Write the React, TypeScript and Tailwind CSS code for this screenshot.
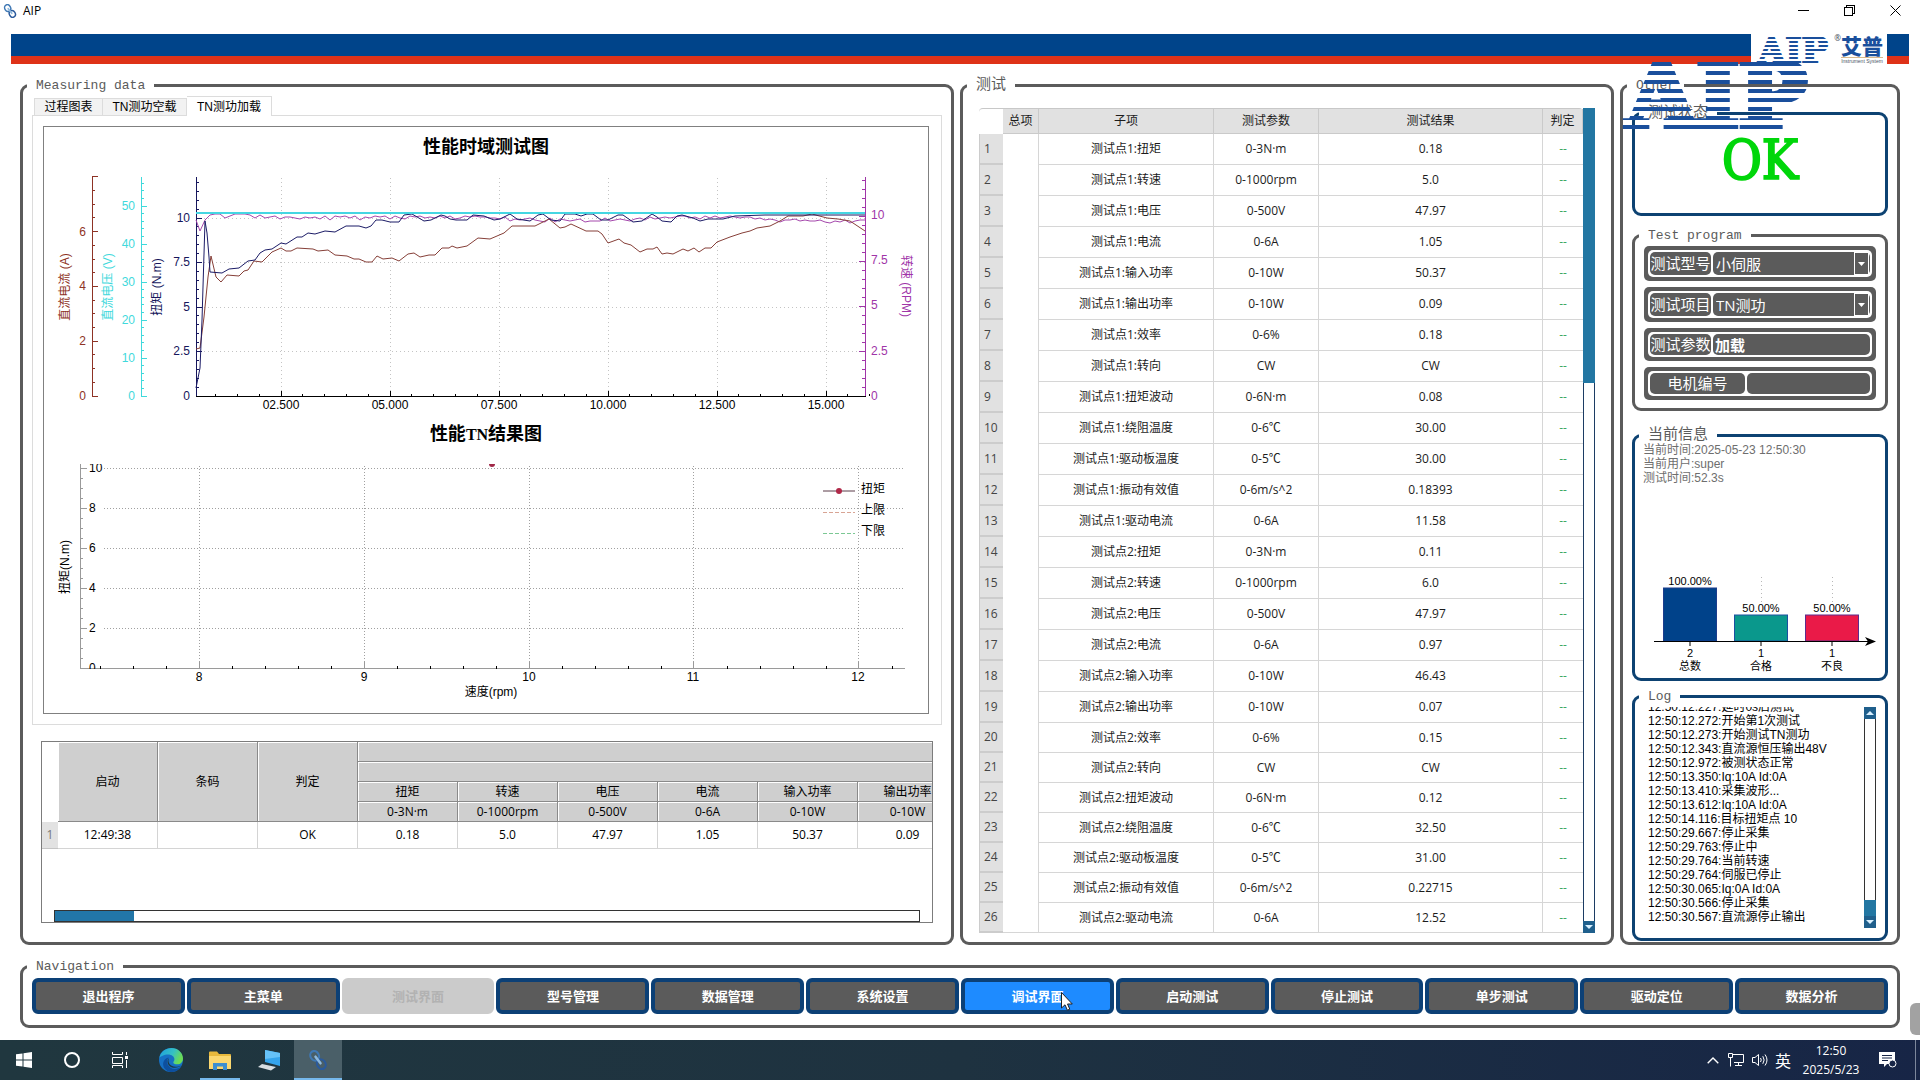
import type { ReactNode } from 'react';
import clsx from 'clsx';

const uiFont = "font-['Open_Sans','Noto_Sans_CJK_SC',sans-serif]";
const songFont = "font-['Liberation_Sans','Noto_Sans_CJK_SC',sans-serif]";

const points: [string, string, string][] = [
  ['测试点1:扭矩', '0-3N·m', '0.18'],
  ['测试点1:转速', '0-1000rpm', '5.0'],
  ['测试点1:电压', '0-500V', '47.97'],
  ['测试点1:电流', '0-6A', '1.05'],
  ['测试点1:输入功率', '0-10W', '50.37'],
  ['测试点1:输出功率', '0-10W', '0.09'],
  ['测试点1:效率', '0-6%', '0.18'],
  ['测试点1:转向', 'CW', 'CW'],
  ['测试点1:扭矩波动', '0-6N·m', '0.08'],
  ['测试点1:绕阻温度', '0-6℃', '30.00'],
  ['测试点1:驱动板温度', '0-5℃', '30.00'],
  ['测试点1:振动有效值', '0-6m/s^2', '0.18393'],
  ['测试点1:驱动电流', '0-6A', '11.58'],
  ['测试点2:扭矩', '0-3N·m', '0.11'],
  ['测试点2:转速', '0-1000rpm', '6.0'],
  ['测试点2:电压', '0-500V', '47.97'],
  ['测试点2:电流', '0-6A', '0.97'],
  ['测试点2:输入功率', '0-10W', '46.43'],
  ['测试点2:输出功率', '0-10W', '0.07'],
  ['测试点2:效率', '0-6%', '0.15'],
  ['测试点2:转向', 'CW', 'CW'],
  ['测试点2:扭矩波动', '0-6N·m', '0.12'],
  ['测试点2:绕阻温度', '0-6℃', '32.50'],
  ['测试点2:驱动板温度', '0-5℃', '31.00'],
  ['测试点2:振动有效值', '0-6m/s^2', '0.22715'],
  ['测试点2:驱动电流', '0-6A', '12.52'],
];

const summary: [string, string, string][] = [
  ['扭矩', '0-3N·m', '0.18'],
  ['转速', '0-1000rpm', '5.0'],
  ['电压', '0-500V', '47.97'],
  ['电流', '0-6A', '1.05'],
  ['输入功率', '0-10W', '50.37'],
  ['输出功率', '0-10W', '0.09'],
];

const logLines = [
  '12:50:12.227:延时0s后测试',
  '12:50:12.272:开始第1次测试',
  '12:50:12.273:开始测试TN测功',
  '12:50:12.343:直流源恒压输出48V',
  '12:50:12.972:被测状态正常',
  '12:50:13.350:Iq:10A Id:0A',
  '12:50:13.410:采集波形...',
  '12:50:13.612:Iq:10A Id:0A',
  '12:50:14.116:目标扭矩点 10',
  '12:50:29.667:停止采集',
  '12:50:29.763:停止中',
  '12:50:29.764:当前转速',
  '12:50:29.764:伺服已停止',
  '12:50:30.065:Iq:0A Id:0A',
  '12:50:30.566:停止采集',
  '12:50:30.567:直流源停止输出',
];

const navItems = [
  '退出程序',
  '主菜单',
  '测试界面',
  '型号管理',
  '数据管理',
  '系统设置',
  '调试界面',
  '启动测试',
  '停止测试',
  '单步测试',
  '驱动定位',
  '数据分析',
];

const torqueCurve =
  '196,388 200,368 202,320 205,221 207,233 209,257 210,272 222,273 229,269 239,268 248,261 255,260 260,253 265,250 272,249 281,243 286,244 297,237 302,237 308,233 315,234 325,231 335,232 346,226 359,226 366,228 371,226 376,220 382,220 390,222 399,222 404,215 412,214 424,221 431,220 441,215 445,216 450,219 456,220 467,220 473,215 484,216 494,220 500,219 510,214 517,219 530,221 538,215 543,214 551,220 560,221 565,214 575,214 581,216 587,214 593,214 601,220 608,220 618,215 623,215 633,222 642,221 652,214 657,217 662,221 671,222 677,216 682,215 693,218 700,221 708,219 723,219 735,216 765,215 865,215';

const currentCurve =
  '196,349 200,348 204,317 208,277 211,256 216,277 221,282 227,275 239,276 244,271 248,270 254,261 262,262 272,252 281,248 286,251 291,251 297,248 313,249 318,251 328,250 335,255 347,256 354,259 359,259 366,262 372,262 377,256 383,259 392,258 399,261 408,254 414,253 420,257 429,255 435,255 442,248 449,248 452,246 457,248 467,246 478,238 490,239 504,233 512,226 535,226 549,219 560,228 565,227 571,224 586,231 598,231 602,234 608,243 619,239 624,243 631,245 640,252 647,249 653,249 657,247 662,254 667,253 673,254 683,249 688,251 694,248 699,252 705,248 711,248 717,242 730,237 742,233 750,231 757,228 770,226 780,221 788,216 803,216 812,214 827,218 838,219 850,221 865,231';

// speed samples, every 5px, as an offset below y=213
const speedSamples =
  '72115311125254364456454637343537453436356343545353653434455648676578959678769888587678657465454335463535434544657679776878879a897a877a99778785877567';

const speedCurve = [
  '196,220 200,231',
  ...speedSamples
    .slice(0, 132)
    .split('')
    .map((c, i) => `${205 + i * 5},${213 + parseInt(c, 16)}`),
  '865,220',
].join(' ');

const range = (n: number) => Array.from({ length: n }, (_, i) => i);

type AxisProps = {
  x: number;
  color: string;
  step: number;
  count: number;
  every: number;
  dir?: number;
  labels: [string, number][];
  labelX: number;
};

function YAxis({ x, color, step, count, every, dir = 1, labels, labelX }: AxisProps) {
  return (
    <g stroke={color} fill={color} shapeRendering="crispEdges">
      <line x1={x} x2={x} y1={177} y2={397} />
      {range(count).map((i) => (
        <line
          key={i}
          x1={x}
          x2={x + dir * (i % every === 0 ? 6 : 3)}
          y1={396 - i * step}
          y2={396 - i * step}
        />
      ))}
      {labels.map(([label, y]) => (
        <text
          key={label}
          x={labelX}
          y={y + 4}
          stroke="none"
          textAnchor={dir > 0 ? 'end' : 'start'}
        >
          {label}
        </text>
      ))}
    </g>
  );
}

function Charts() {
  return (
    <svg viewBox="44 127 884 586" className={clsx('block w-full text-[12px]', songFont)}>
      <text x="486" y="153" textAnchor="middle" className="text-[18px] font-bold">
        性能时域测试图
      </text>

      <g stroke="#c4c4c4" strokeDasharray="1 3" shapeRendering="crispEdges">
        {[281, 390, 499, 608, 717, 826].map((x) => (
          <line key={x} x1={x} x2={x} y1={178} y2={396} />
        ))}
        {[218, 262, 307, 351].map((y) => (
          <line key={y} x1={196} x2={865} y1={y} y2={y} />
        ))}
      </g>

      <YAxis
        x={92}
        color="#8e3325"
        step={13.7}
        count={17}
        every={4}
        labels={[['0', 396], ['2', 341], ['4', 286], ['6', 232]]}
        labelX={86}
      />
      <YAxis
        x={141}
        color="#3fd9dc"
        step={7.6}
        count={29}
        every={5}
        labels={[['0', 396], ['10', 358], ['20', 320], ['30', 282], ['40', 244], ['50', 206]]}
        labelX={135}
      />
      <YAxis
        x={196}
        color="#16165c"
        step={8.9}
        count={25}
        every={5}
        labels={[['0', 396], ['2.5', 351], ['5', 307], ['7.5', 262], ['10', 218]]}
        labelX={190}
      />
      <YAxis
        x={865}
        color="#a035a8"
        step={9}
        count={25}
        every={5}
        dir={-1}
        labels={[['0', 396], ['2.5', 351], ['5', 305], ['7.5', 260], ['10', 215]]}
        labelX={871}
      />

      <g textAnchor="middle">
        <text transform="translate(69 287) rotate(-90)" fill="#8e3325">直流电流 (A)</text>
        <text transform="translate(112 287) rotate(-90)" fill="#3fd9dc">直流电压 (V)</text>
        <text transform="translate(161 287) rotate(-90)" fill="#16165c">扭矩 (N.m)</text>
        <text transform="translate(902 286) rotate(90)" fill="#a035a8">转速 (RPM)</text>
      </g>

      <g stroke="#000" shapeRendering="crispEdges">
        <line x1={196} x2={866} y1={396.5} y2={396.5} />
        {range(31).map((i) => (
          <line
            key={i}
            x1={215.6 + i * 21.8}
            x2={215.6 + i * 21.8}
            y1={i % 5 === 3 ? 391 : 394}
            y2={396}
          />
        ))}
      </g>
      <g textAnchor="middle">
        {['02.500', '05.000', '07.500', '10.000', '12.500', '15.000'].map((t, i) => (
          <text key={t} x={281 + i * 109} y={409}>
            {t}
          </text>
        ))}
      </g>

      <g fill="none" strokeLinejoin="round">
        <polyline points={speedCurve} stroke="#a548ac" />
        <polyline points={currentCurve} stroke="#863f38" />
        <polyline points={torqueCurve} stroke="#1b1b66" />
        <line x1={196} x2={865} y1={213} y2={213} stroke="#45d6e2" strokeWidth={2} />
      </g>

      <text x="486" y="440" textAnchor="middle" className="text-[18px] font-bold">
        性能
        <tspan className="font-['Liberation_Serif'] text-[16px]">TN</tspan>
        结果图
      </text>

      <g stroke="#a0a0a0" strokeDasharray="1 2" shapeRendering="crispEdges">
        {[199, 364, 529, 693, 858].map((x) => (
          <line key={x} x1={x} x2={x} y1={466} y2={668} />
        ))}
        {[468, 508, 548, 588, 628].map((y) => (
          <line key={y} x1={104} x2={904} y1={y} y2={y} />
        ))}
      </g>
      <g stroke="#9a9a9a" shapeRendering="crispEdges">
        <line x1={80} x2={80} y1={464} y2={669} />
        <line x1={80} x2={905} y1={668} y2={668} />
        {range(21).map((i) => (
          <line key={i} x1={80} x2={i % 4 === 0 ? 87 : 83} y1={668 - i * 10} y2={668 - i * 10} />
        ))}
        {[199, 364, 529, 693, 858].map((x) => (
          <line key={x} x1={x} x2={x} y1={662} y2={668} />
        ))}
      </g>
      <g stroke="#000" shapeRendering="crispEdges">
        {range(25)
          .filter((i) => i % 5 !== 3)
          .map((i) => (
            <line key={i} x1={100 + i * 33} x2={100 + i * 33} y1={666} y2={669} />
          ))}
      </g>
      <clipPath id="tn-plot">
        <rect x="80" y="464" width="830" height="205" />
      </clipPath>
      <g clipPath="url(#tn-plot)">
        {['0', '2', '4', '6', '8', '10'].map((t, i) => (
          <text key={t} x={89} y={672 - i * 40}>
            {t}
          </text>
        ))}
        <circle cx="492" cy="464" r="3" fill="#a02848" />
      </g>
      <g textAnchor="middle">
        {[199, 364, 529, 693, 858].map((x, i) => (
          <text key={x} x={x} y={681}>
            {8 + i}
          </text>
        ))}
        <text x="491" y="696">速度(rpm)</text>
        <text transform="translate(69 567) rotate(-90)">扭矩(N.m)</text>
      </g>

      <line x1={823} x2={855} y1={491} y2={491} stroke="#5a3a48" />
      <circle cx="839" cy="491" r="3" fill="#b02848" />
      <line x1={823} x2={855} y1={512.5} y2={512.5} stroke="#d8a494" strokeDasharray="4 2" />
      <line x1={823} x2={855} y1={533.5} y2={533.5} stroke="#7cc894" strokeDasharray="4 2" />
      <text x="861" y="493">扭矩</text>
      <text x="861" y="514">上限</text>
      <text x="861" y="535">下限</text>
    </svg>
  );
}

function YieldChart() {
  const bars = [
    { x: 1690, top: 588, pct: '100.00%', n: '2', name: '总数', fill: '#00428a', edge: '#1c3c8c' },
    { x: 1761, top: 615, pct: '50.00%', n: '1', name: '合格', fill: '#0a988c', edge: '#1c50a0' },
    { x: 1832, top: 615, pct: '50.00%', n: '1', name: '不良', fill: '#ea1a48', edge: '#5c2c8c' },
  ];

  return (
    <svg viewBox="1635 574 250 102" className={clsx('block w-full text-[11px]', songFont)}>
      <g stroke="#b8b8b8" strokeDasharray="1 3" shapeRendering="crispEdges">
        <line x1={1761} x2={1761} y1={577} y2={602} />
        <line x1={1832} x2={1832} y1={577} y2={602} />
      </g>
      {bars.map((b) => (
        <g key={b.name} textAnchor="middle">
          <rect x={b.x - 26.5} y={b.top} width={53} height={641 - b.top} fill={b.fill} stroke={b.edge} />
          <line x1={b.x} x2={b.x} y1={641} y2={646} stroke="#000" />
          <text x={b.x} y={b.top - 3}>{b.pct}</text>
          <text x={b.x} y={657}>{b.n}</text>
          <text x={b.x} y={670}>{b.name}</text>
        </g>
      ))}
      <line x1={1654} x2={1870} y1={641.5} y2={641.5} stroke="#000" />
      <path d="M1876 641.5 L1865 637 L1868 641.5 L1865 646 Z" />
    </svg>
  );
}

type GroupProps = {
  title: string;
  cjk?: boolean;
  blue?: boolean;
  className?: string;
  children: ReactNode;
};

function Group({ title, cjk, blue, className, children }: GroupProps) {
  return (
    <fieldset
      className={clsx(
        'min-w-0 rounded-[9px] border-3',
        blue ? 'border-[#0d4272]' : 'border-[#5b5b5b]',
        className,
      )}
    >
      <legend
        className={clsx(
          "ml-1 px-[9px] font-['Liberation_Mono','Noto_Sans_CJK_SC',monospace] leading-[15px] whitespace-nowrap text-[#5b5b5b]",
          cjk ? 'text-[15px]' : 'text-[13px]',
        )}
      >
        {title}
      </legend>
      {children}
    </fieldset>
  );
}

function StripedLogo({ id, size, className }: { id: string; size: 'lg' | 'sm'; className?: string }) {
  const big = size === 'lg';
  return (
    <svg
      viewBox={big ? '0 0 200 67' : '0 0 78 27'}
      className={className}
      aria-label="AIP"
    >
      <pattern
        id={id}
        width="10"
        height={big ? 9 : 4}
        patternUnits="userSpaceOnUse"
      >
        <rect width="10" height={big ? 4 : 2} fill="#1a4f9c" />
      </pattern>
      <text
        x={big ? 5 : 2}
        y={big ? 65 : 26}
        fill={`url(#${id})`}
        stroke={`url(#${id})`}
        strokeWidth={big ? 7 : 2}
        className={clsx(
          "font-['DejaVu_Serif',serif] font-bold",
          big ? 'text-[90px]' : 'text-[35px]',
        )}
      >
        AIP
      </text>
    </svg>
  );
}

function LinkIcon({ className }: { className?: string }) {
  return (
    <svg viewBox="0 0 24 24" fill="none" className={className}>
      <ellipse cx="8" cy="7" rx="5" ry="6" transform="rotate(-30 8 7)" stroke="#3f78b4" strokeWidth="2.5" />
      <ellipse cx="16" cy="17" rx="5" ry="6" transform="rotate(-30 16 17)" stroke="#2a5a9c" strokeWidth="2.5" />
      <path d="M9 8 L15 16" stroke="#8db8de" strokeWidth="3" strokeLinecap="round" />
    </svg>
  );
}

function TitleBar() {
  return (
    <header className="flex h-[34px] items-start justify-between">
      <div className="flex h-[22px] items-center gap-[6px] pl-[3px]">
        <LinkIcon className="size-[14px]" />
        <h1 className="font-['Open_Sans',sans-serif] text-[12px]">AIP</h1>
      </div>
      <div className="flex h-[20px] items-center">
        <button type="button" aria-label="minimize" className="flex w-[46px] justify-center">
          <svg width="11" height="11" stroke="#000" shapeRendering="crispEdges">
            <path d="M0 5.5 H11" />
          </svg>
        </button>
        <button type="button" aria-label="restore" className="flex w-[46px] justify-center">
          <svg width="11" height="11" fill="none" stroke="#000" shapeRendering="crispEdges">
            <path d="M0.5 2.5 H8.5 V10.5 H0.5 Z M2.5 2.5 V0.5 H10.5 V8.5 H8.5" />
          </svg>
        </button>
        <button type="button" aria-label="close" className="flex w-[46px] justify-center">
          <svg width="11" height="11" stroke="#000">
            <path d="M0.5 0.5 L10.5 10.5 M10.5 0.5 L0.5 10.5" />
          </svg>
        </button>
        <span className="w-[2px]" />
      </div>
    </header>
  );
}

function Banner() {
  return (
    <div className="relative mx-[11px] flex h-[30px]">
      <div className="flex-1 border-b-8 border-[#de3218] bg-[#00448a]" />
      <div className="flex w-[136px] justify-between pr-[4px] pl-[5px]">
        <StripedLogo id="stripes-sm" size="sm" className="mt-[3px] h-[27px] w-[78px]" />
        <span className="text-[8px] leading-[8px] text-gray-600">®</span>
        <div className="flex flex-col items-center">
          <span className="font-['Noto_Sans_CJK_SC',sans-serif] text-[21px] leading-[23px] font-black text-[#1a4f9c]">
            艾普
          </span>
          <span className="border-t border-[#d8b88c] font-['Liberation_Sans',sans-serif] text-[5px] leading-[6px] whitespace-nowrap text-gray-600">
            Instrument System
          </span>
        </div>
      </div>
      <div className="w-[22px] border-b-8 border-[#de3218] bg-[#00448a]" />
      <StripedLogo
        id="stripes-lg"
        size="lg"
        className="absolute top-[28px] right-[87px] z-10 h-[67px] w-[200px]"
      />
    </div>
  );
}

function SummaryTable() {
  const head = 'border-r border-b border-[#8a8a8a] bg-[#cfcfcf] font-normal shadow-[inset_1px_1px_0_#fff]';
  const cell = 'border-r border-b border-[#d4d4d4] text-center';
  return (
    <div className="mx-[9px] mt-4 flex h-[182px] flex-col justify-between overflow-hidden border border-[#7c7c7c]">
      <table className={clsx('w-[916px] table-fixed border-separate border-spacing-0 text-[12px] leading-4', uiFont)}>
        <colgroup>
          <col className="w-4" />
          {range(9).map((i) => (
            <col key={i} className="w-[100px]" />
          ))}
        </colgroup>
        <thead>
          <tr className="h-5">
            <td rowSpan={4} />
            {['启动', '条码', '判定'].map((t) => (
              <th key={t} rowSpan={4} className={head}>
                {t}
              </th>
            ))}
            <th colSpan={6} className={head} />
          </tr>
          <tr className="h-5">
            <th colSpan={6} className={head} />
          </tr>
          <tr className="h-5">
            {summary.map(([name]) => (
              <th key={name} className={head}>
                {name}
              </th>
            ))}
          </tr>
          <tr className="h-5">
            {summary.map(([name, limit]) => (
              <th key={name} className={head}>
                {limit}
              </th>
            ))}
          </tr>
        </thead>
        <tbody>
          <tr className="h-[27px]">
            <th scope="row" className="border-b border-[#c4c4c4] bg-[#e2e2e2] font-normal text-[#777]">
              1
            </th>
            <td className={cell}>12:49:38</td>
            <td className={cell} />
            <td className={cell}>OK</td>
            {summary.map(([name, , value]) => (
              <td key={name} className={cell}>
                {value}
              </td>
            ))}
          </tr>
        </tbody>
      </table>
      <div className="mr-3 ml-3 h-3 border border-[#333]">
        <div className="h-full w-[79px] bg-[#2276a8]" />
      </div>
    </div>
  );
}

function MeasuringPanel() {
  return (
    <Group title="Measuring data">
      <div className="px-[9px] pt-[3px] pb-[18px]">
        <div role="tablist" className={clsx('flex items-end pl-[2px] text-[12px] leading-4', songFont)}>
          <button role="tab" type="button" className="h-[17px] w-[69px] border border-b-0 border-[#dcdcdc] bg-[#f2f2f2]">
            过程图表
          </button>
          <button role="tab" type="button" className="h-[17px] w-[84px] border border-b-0 border-l-0 border-[#dcdcdc] bg-[#f2f2f2]">
            TN测功空载
          </button>
          <button role="tab" type="button" aria-selected className="relative -mb-px h-5 w-[85px] border border-b-0 border-l-0 border-[#dcdcdc] bg-white">
            TN测功加载
          </button>
        </div>
        <div className="border border-[#dcdcdc] pt-[10px] pr-3 pb-[10px] pl-[10px]">
          <div className="border border-[#808080]">
            <Charts />
          </div>
        </div>
        <SummaryTable />
      </div>
    </Group>
  );
}

function TestPanel() {
  const head = 'border-r border-b border-[#cacaca] bg-[#e1e1e1] font-normal';
  const cell = 'border-r border-b border-[#d6d6d6] text-center';
  return (
    <Group title="测试" cjk>
      <div className="flex px-4 pt-[15px] pb-[9px]">
        <table
          className={clsx(
            'flex-1 table-fixed border-separate border-spacing-0 rounded-[4px] border-t border-[#c8c8c8] text-[12px] leading-4 text-[#1c1c1c]',
            uiFont,
          )}
        >
          <colgroup>
            <col className="w-6" />
            <col className="w-9" />
            <col className="w-[175px]" />
            <col className="w-[105px]" />
            <col />
            <col className="w-10" />
          </colgroup>
          <thead>
            <tr className="h-[25px]">
              <td />
              {['总项', '子项', '测试参数', '测试结果', '判定'].map((t) => (
                <th key={t} className={head}>
                  {t}
                </th>
              ))}
            </tr>
          </thead>
          <tbody>
            {points.map(([name, limit, value], i) => (
              <tr key={name} className={i < 19 ? 'h-[31px]' : 'h-[30px]'}>
                <th
                  scope="row"
                  className="border-b-2 border-l border-[#cccccc] bg-[#e1e1e1] pl-1 text-left font-normal text-[#444]"
                >
                  {i + 1}
                </th>
                {i === 0 && <td rowSpan={points.length} className="border-r border-b border-[#d6d6d6]" />}
                <td className={cell}>{name}</td>
                <td className={cell}>{limit}</td>
                <td className={cell}>{value}</td>
                <td className="border-b border-[#d6d6d6] text-center text-[#3aa860]">--</td>
              </tr>
            ))}
          </tbody>
        </table>
        <div className="flex w-3 flex-col justify-between border-x border-[#1c3c64]">
          <div className="-mx-px h-[275px] bg-[#2276a2]" />
          <ScrollArrow down />
        </div>
      </div>
    </Group>
  );
}

function ScrollArrow({ down }: { down?: boolean }) {
  return (
    <div className="-mx-px flex h-3 items-center justify-center bg-[#1f5f8c]">
      <svg width="8" height="4" fill="#d8f0ff">
        <path d={down ? 'M0 0 H8 L4 4 Z' : 'M0 4 H8 L4 0 Z'} />
      </svg>
    </div>
  );
}

function FieldRow({ id, label, wide, tall, children }: { id: string; label: string; wide?: boolean; tall?: boolean; children: ReactNode }) {
  return (
    <div className="rounded-[5px] bg-[#5b5b5b] p-1">
      <div className={clsx('flex gap-[2px] rounded-[5px] bg-white p-[2px]', tall ? 'h-[27px]' : 'h-[25px]')}>
        <label
          htmlFor={id}
          className={clsx(
            'flex shrink-0 items-center justify-center overflow-hidden rounded-[5px] bg-[#5b5b5b] whitespace-nowrap',
            wide ? 'w-[95px]' : 'w-[61px]',
          )}
        >
          {label}
        </label>
        <div className="relative min-w-0 flex-1 rounded-[5px] bg-[#5b5b5b]">{children}</div>
      </div>
    </div>
  );
}

function SelectBox({ id, value }: { id: string; value: string }) {
  return (
    <>
      <select id={id} defaultValue={value} className="size-full appearance-none pl-[3px] leading-5 outline-none">
        <option>{value}</option>
      </select>
      <span className="pointer-events-none absolute inset-y-0 right-px flex w-[15px] items-center justify-center border border-white">
        <svg width="7" height="4" fill="#fff">
          <path d="M0 0 H7 L3.5 4 Z" />
        </svg>
      </span>
    </>
  );
}

function OtherPanel() {
  return (
    <Group title="Other">
      <div className="px-[9px] pt-[13px] pb-px">
        <Group title="测试状态" cjk blue className="h-[110px]">
          <p className="text-center font-['DejaVu_Serif_Condensed','DejaVu_Serif',serif] text-[54px] leading-[80px] text-[#00d60a] [-webkit-text-stroke:2px_#00d60a]">
            OK
          </p>
        </Group>

        <Group title="Test program" className="mt-3 h-[183px]">
          <div className={clsx('flex flex-col gap-[6px] px-[9px] pt-[3px] text-[15px] text-white', uiFont)}>
            <FieldRow id="model" label="测试型号" tall>
              <SelectBox id="model" value="小伺服" />
            </FieldRow>
            <FieldRow id="item" label="测试项目" tall>
              <SelectBox id="item" value="TN测功" />
            </FieldRow>
            <FieldRow id="param" label="测试参数">
              <input id="param" readOnly value="加载" className="block size-full px-[2px] font-bold outline-none" />
            </FieldRow>
            <FieldRow id="motor" label="电机编号" wide>
              <input id="motor" className="block size-full px-[2px] outline-none" />
            </FieldRow>
          </div>
        </Group>

        <Group title="当前信息" cjk blue className="mt-[17px] h-[253px]">
          <div className="flex h-[233px] flex-col justify-between">
            <div className={clsx('pl-2 text-[12px] leading-[14px] text-[#6e6e6e]', songFont)}>
              <p>当前时间:2025-05-23 12:50:30</p>
              <p>当前用户:super</p>
              <p>测试时间:52.3s</p>
            </div>
            <YieldChart />
          </div>
        </Group>

        <Group title="Log" blue className="mt-2 h-[252px]">
          <div className="flex justify-between pt-[3px] pr-[9px] pl-[13px]">
            <div className={clsx('flex h-[217px] flex-col justify-end overflow-hidden text-[12px] leading-[14px] whitespace-nowrap', songFont)}>
              {logLines.map((line) => (
                <p key={line} className="shrink-0">
                  {line}
                </p>
              ))}
            </div>
            <div className="flex h-[221px] w-3 flex-col border-x border-[#333]">
              <ScrollArrow />
              <div className="flex-1" />
              <div className="-mx-px h-4 bg-[#2276a2]" />
              <ScrollArrow down />
            </div>
          </div>
        </Group>
      </div>
    </Group>
  );
}

function Navigation() {
  return (
    <Group title="Navigation" className="mx-5 mt-[14px]">
      <nav className="flex gap-[2px] px-[9px] pt-1 pb-[11px]">
        {navItems.map((item) => {
          const disabled = item === '测试界面';
          const active = item === '调试界面';
          return (
            <button
              key={item}
              type="button"
              disabled={disabled}
              className={clsx(
                "relative h-9 flex-1 rounded-[6px] border-4 font-['Noto_Sans_CJK_SC',sans-serif] text-[13px] font-bold",
                disabled ? 'border-[#cbcbcb] bg-[#cbcbcb] text-[#b2b2b2]' : 'border-[#0c4076] text-white',
                active && 'bg-[#1e8bff]',
                !disabled && !active && 'bg-[#5b5b5b]',
              )}
            >
              {item}
              {active && (
                <svg viewBox="0 0 12 19" className="absolute top-[10px] left-[96px] h-[19px] w-3">
                  <path d="M0.5 0.5 V16 L4 12.8 L6.4 18.2 L8.8 17.2 L6.5 12 H11.3 Z" fill="#fff" stroke="#222" />
                </svg>
              )}
            </button>
          );
        })}
      </nav>
    </Group>
  );
}

function Taskbar() {
  return (
    <footer className="flex h-10 items-stretch justify-between bg-linear-to-r from-[#20373f] via-[#1e3240] to-[#172546] text-white">
      <div className="flex">
        <button type="button" aria-label="start" className="flex w-12 items-center justify-center">
          <svg width="16" height="16" fill="#fff">
            <path d="M0 2.3 L6.5 1.4 V7.5 H0 Z M7.5 1.2 L16 0 V7.5 H7.5 Z M0 8.5 H6.5 V14.6 L0 13.7 Z M7.5 8.5 H16 V16 L7.5 14.8 Z" />
          </svg>
        </button>
        <button type="button" aria-label="cortana" className="flex w-12 items-center justify-center">
          <svg width="16" height="16" fill="none" stroke="#fff" strokeWidth="2">
            <circle cx="8" cy="8" r="7" />
          </svg>
        </button>
        <button type="button" aria-label="task view" className="flex w-12 items-center justify-center">
          <svg width="17" height="16" fill="none" stroke="#fff">
            <path d="M0.5 0 V2.5 H10.5 V0 M0.5 5.5 H10.5 V11.5 H0.5 Z M0.5 16 V13.5 H10.5 V16 M14.5 0 V3 M14.5 8 V16" />
            <rect x="13.5" y="4.5" width="2" height="2" fill="#fff" />
          </svg>
        </button>
        <button type="button" aria-label="edge" className="flex w-[54px] items-center justify-center">
          <svg viewBox="0 0 24 24" className="size-6">
            <linearGradient id="edge-top" x1="0" y1="0" x2="1" y2="0.4">
              <stop offset="0" stopColor="#1c9de0" />
              <stop offset="0.6" stopColor="#35c1c4" />
              <stop offset="1" stopColor="#6bdc55" />
            </linearGradient>
            <circle cx="12" cy="12" r="12" fill="#1670c4" />
            <path d="M0.3 10 C1.5 3.5 7 0 12.5 0 C19 0 24 5 24 10.5 C24 14 21.5 16.3 18.5 16.3 C15.5 16.3 14.3 15.2 14.3 14.4 C14.3 13.6 15.4 13.2 15.4 11.3 C15.4 8.8 12.8 6.6 9 6.6 C5 6.6 1.5 8.5 0.3 10 Z" fill="url(#edge-top)" />
            <path d="M10 9.5 C7 11.5 7.3 17 11.5 19.8 C14.5 21.7 19 21.3 22.2 18.6 C19.5 23 15 24.3 11.5 24 C6.5 23.3 3.6 19 4.2 15 C4.7 12 7 9.8 10 9.5 Z" fill="#0d4f9e" />
            <path d="M10 10 C8.8 12.5 9.6 16 12.6 17.8 C15.4 19.4 19.6 18.9 22.8 17.2 C20 19.8 13 21 10 17.4 C8 15 8.3 11.5 10 10 Z" fill="#20373f" />
          </svg>
        </button>
        <button type="button" aria-label="explorer" className="flex w-11 flex-col items-center justify-between pt-[11px]">
          <svg width="22" height="20">
            <path d="M0 1.5 Q0 0.5 1 0.5 H8 L10 3 H21 Q22 3 22 4 V18 H0 Z" fill="#e8b93c" />
            <path d="M0 5 H22 V18 H0 Z" fill="#fbd870" />
            <path d="M4 19 V12 H18 V19 H14 V15.5 H8 V19 Z" fill="#3d8fd0" />
          </svg>
          <span className="h-[2px] w-10 bg-[#76b9ed]" />
        </button>
        <button type="button" aria-label="computer" className="flex w-12 items-center justify-center pl-2">
          <svg width="24" height="22">
            <path d="M7 1 L22 4 V17 L7 13 Z" fill="#35a4ec" />
            <path d="M7 1 L22 4 V8 L7 10 Z" fill="#66c2f8" />
            <path d="M4 15 L18 18 L13 21.5 L0 18 Z" fill="#d8dee2" />
          </svg>
        </button>
        <button type="button" aria-label="AIP" className="ml-1 flex w-12 flex-col items-center justify-between border-b-2 border-[#76b9ed] bg-[#4a5f68] pt-[10px]">
          <LinkIcon className="size-5" />
        </button>
      </div>
      <div className="flex items-center">
        <svg width="12" height="7" fill="none" stroke="#fff" strokeWidth="1.4">
          <path d="M0.7 6.3 L6 1 L11.3 6.3" />
        </svg>
        <svg width="17" height="14" fill="none" stroke="#fff" className="ml-[9px]">
          <path d="M5 1.5 H15.5 V9.5 H6 M10.5 9.5 V12.5 M7 12.5 H14 M0.5 0.5 H4.5 V4.5 H0.5 Z M2.5 5 V13.5" />
        </svg>
        <svg width="17" height="14" fill="none" stroke="#fff" className="ml-[7px]">
          <path d="M0.5 4.5 H3 L6.5 1.5 V12.5 L3 9.5 H0.5 Z M8.5 5 Q10 7 8.5 9 M10.8 3.2 Q13.5 7 10.8 10.8 M13 1.5 Q17 7 13 12.5" />
        </svg>
        <span className="ml-[6px] font-['Noto_Sans_CJK_SC',sans-serif] text-[16px] leading-5">英</span>
        <div className={clsx('ml-[10px] w-[60px] text-center text-[12px] leading-[19px]', uiFont)}>
          <p>12:50</p>
          <p>2025/5/23</p>
        </div>
        <svg width="18" height="18" className="ml-[18px]">
          <path d="M0 1 H16 V13 H8 L5 16 V13 H0 Z" fill="#fff" />
          <path d="M3 4.5 H13 M3 7 H13 M3 9.5 H9" stroke="#172546" />
          <circle cx="13.5" cy="12.5" r="3.5" fill="#172546" stroke="#fff" />
        </svg>
        <span className="ml-[18px] h-10 w-px bg-[#7c879c]" />
        <span className="w-1" />
      </div>
    </footer>
  );
}

export default function App() {
  return (
    <div className="relative flex min-h-screen flex-col bg-white text-black">
      <TitleBar />
      <Banner />
      <main className="mx-5 mt-[14px] grid grid-cols-[minmax(0,934fr)_minmax(0,654fr)_minmax(0,280fr)] gap-[6px]">
        <MeasuringPanel />
        <TestPanel />
        <OtherPanel />
      </main>
      <Navigation />
      <div className="mt-auto pt-3">
        <Taskbar />
      </div>
      <div className="absolute right-0 bottom-[45px] h-8 w-[10px] rounded-l-[6px] bg-[#a2a2a2]" />
    </div>
  );
}
